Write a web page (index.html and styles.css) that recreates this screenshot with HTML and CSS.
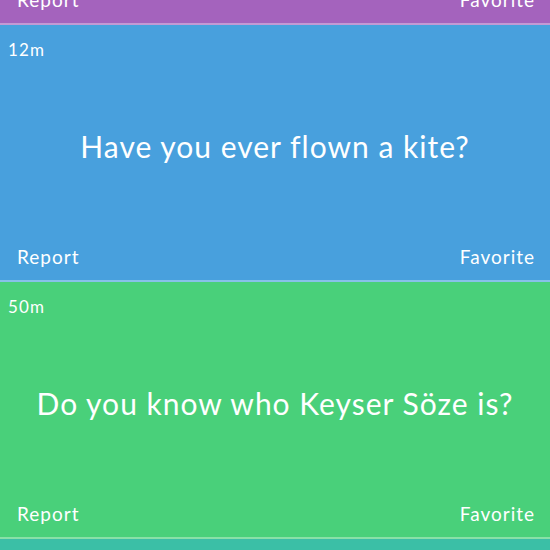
FILE: index.html
```html
<!DOCTYPE html>
<html>
<head>
<meta charset="utf-8">
<link rel="stylesheet" href="styles.css">
</head>
<body>
<div class="feed">
  <div class="card purple">
    <div class="time">3m</div>
    <div class="question">What is your favorite color?</div>
    <div class="actions"><span>Report</span><span>Favorite</span></div>
  </div>
  <div class="card blue">
    <div class="time">12m</div>
    <div class="question">Have you ever flown a kite?</div>
    <div class="actions"><span>Report</span><span>Favorite</span></div>
  </div>
  <div class="card green">
    <div class="time">50m</div>
    <div class="question">Do you know who Keyser Söze is?</div>
    <div class="actions"><span>Report</span><span>Favorite</span></div>
  </div>
  <div class="card teal">
    <div class="time">1h</div>
    <div class="question">Do you like pizza?</div>
    <div class="actions"><span>Report</span><span>Favorite</span></div>
  </div>
</div>
</body>
</html>
```
FILE: styles.css
```css
html, body {
  margin: 0;
  padding: 0;
  overflow: hidden;
}
body {
  font-family: Lato, "Open Sans", sans-serif;
  color: #fff;
}
.feed {
  margin-top: -232px;
  display: flex;
  flex-direction: column;
}
.card {
  height: 255px;
  border-bottom: 2px solid rgba(255, 255, 255, 0.35);
  display: flex;
  flex-direction: column;
}
.purple { background: #a463bd; }
.blue { background: #48a0dd; }
.green { background: #49d07a; }
.teal { background: #3bbfa6; }
.time {
  font-size: 17px;
  letter-spacing: 1.2px;
  padding: 15px 8px 0;
  line-height: 20px;
}
.question {
  flex: 1;
  display: flex;
  align-items: center;
  justify-content: center;
  font-size: 30px;
  letter-spacing: 1px;
  padding-bottom: 14px;
}
.actions {
  display: flex;
  justify-content: space-between;
  font-size: 19px;
  letter-spacing: 1px;
  line-height: 22px;
  padding: 0 15px 12px 17px;
}
```
